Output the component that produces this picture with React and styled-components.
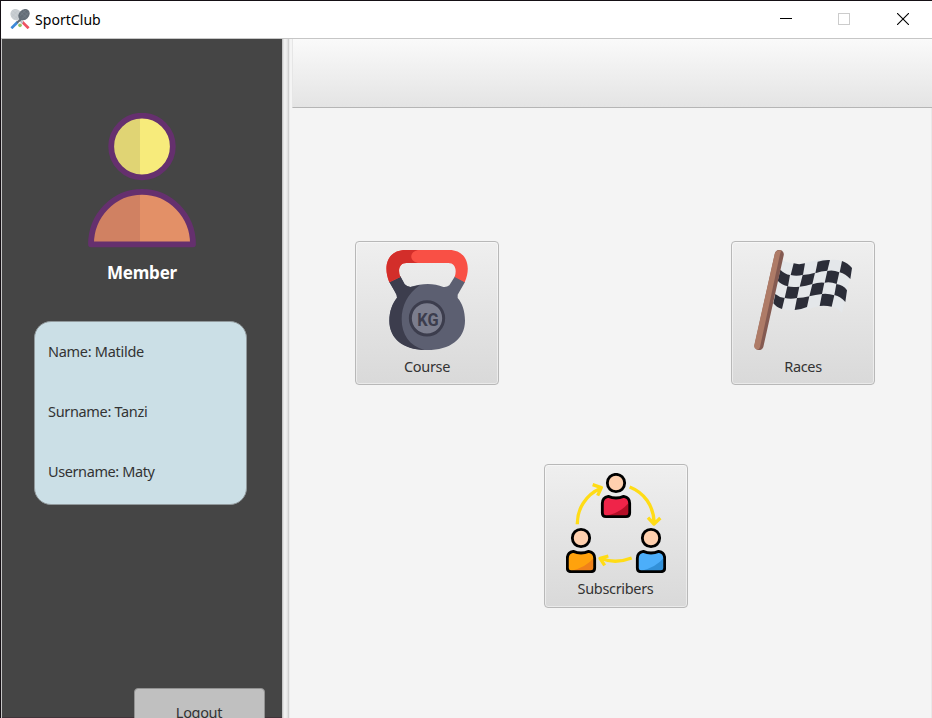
import React from "react";
import styled, { createGlobalStyle } from "styled-components";

const GlobalStyle = createGlobalStyle`
  * { box-sizing: border-box; }
  html, body { margin: 0; height: 100%; overflow: hidden; background: #f4f4f4; }
  svg { display: block; flex: none; }
`;

const Window = styled.div`
  width: 932px;
  height: 718px;
  display: flex;
  flex-direction: column;
  overflow: hidden;
  border-top: 1px solid #151015;
  border-left: 1px solid #151015;
  background: #f4f4f4;
  color: #333;
  font-family: "Noto Sans", "Open Sans", sans-serif;
  font-size: 15px;
`;

const TitleBar = styled.header`
  flex: none;
  height: 38px;
  display: flex;
  align-items: center;
  justify-content: space-between;
  padding: 0 23px 1px 9px;
  background: #fff;
  border-bottom: 1px solid #c6c6c6;
`;

const TitleGroup = styled.div`
  display: flex;
  align-items: center;
  gap: 5px;
  color: #000;

  span { padding-top: 2px; }
`;

const Controls = styled.div`
  display: grid;
  grid-template-columns: 58px 59px 12px;
  align-items: center;
`;

const Text = styled.span`
  display: block;
  white-space: nowrap;
  line-height: 20px;
  font-size: ${(p) => p.$size || 14.5}px;
  letter-spacing: ${(p) => p.$track ?? -0.33}px;
`;

const Body = styled.div`
  flex: 1;
  min-height: 0;
  display: flex;
  border-left: 1px solid #c6c6c6;
`;

const Sidebar = styled.aside`
  flex: none;
  width: 280px;
  display: flex;
  flex-direction: column;
  align-items: center;
  padding-top: 74px;
  background: #454545;
  border-bottom: 1px solid #40343a;
`;

const Role = styled.h2`
  margin: 12px 0 0;
  color: #fff;
  font-size: 17px;
  line-height: 24px;
  font-weight: 700;
  letter-spacing: ${(p) => p.$track}px;
`;

const InfoCard = styled.section`
  flex: none;
  width: 213px;
  height: 184px;
  margin: 36px 3px 0 0;
  padding: 19px 13px;
  display: flex;
  flex-direction: column;
  gap: 40px;
  border: 1px solid #91999c;
  border-radius: 17px;
  background: #cbdfe6;
`;

const LogoutButton = styled.button`
  flex: none;
  align-self: flex-end;
  width: 131px;
  height: 50px;
  margin: 183px 17px 0 0;
  padding: 0 1px 2px 0;
  display: flex;
  align-items: center;
  justify-content: center;
  border: 1px solid #929292;
  border-radius: 4px;
  background: #c0c0c0;
  color: #333;
  font-family: inherit;
`;

const Divider = styled.div`
  flex: none;
  width: 8px;
  border-left: 1px solid #c8c8c8;
  background: linear-gradient(90deg, #e2e2e2 0 1px, #f0f0f0 1px 3px, #ebebeb 3px 4px, #e2e2e2 4px 5px, #d0d0d0 5px 6px, #ececec 6px);
`;

const Main = styled.main`
  flex: 1;
  padding-left: 2px;
  border-right: 1px solid #e9e9e9;
`;

const ToolBar = styled.div`
  height: 69px;
  margin-right: -1px;
  border-left: 1px solid #e6e6e6;
  border-bottom: 1px solid #b5b5b5;
  background: linear-gradient(#fafafa, #e4e4e4);
`;

const Tiles = styled.div`
  display: grid;
  grid-template-columns: 144px 144px;
  column-gap: 232px;
  row-gap: 79px;
  padding: 133px 0 0 63px;
`;

const Tile = styled.button`
  width: 144px;
  height: 144px;
  padding: 8px 0 0;
  display: flex;
  flex-direction: column;
  align-items: center;
  gap: ${(p) => (p.$wide ? 5 : 6)}px;
  border: 1px solid #b8b8b8;
  border-radius: 4px;
  background: linear-gradient(#efefef, #d9d9d9);
  box-shadow: inset 0 0 0 1px rgba(255, 255, 255, 0.45);
  color: #333;
  font-family: inherit;
  ${(p) => p.$wide && "grid-column: 1 / -1; justify-self: center; margin-left: 1px;"}
`;

function RacketsIcon() {
  return (
    <svg width="20" height="20" viewBox="0 0 60 60">
      <path d="M40 42 53 55" stroke="#ee5261" strokeWidth="8" strokeLinecap="square" />
      <path d="M20 42 7 55" stroke="#3d8ad9" strokeWidth="8" strokeLinecap="square" />
      <path d="m22 28 16 14" stroke="#b6bdc4" strokeWidth="5" />
      <ellipse cx="18" cy="17" rx="16" ry="18" transform="rotate(-42 18 17)" fill="#c9ced2" />
      <path d="m4 13 20 17M8 5l20 17M4 25 23 5M12 31 29 14" stroke="#b3babf" />
      <path d="M37 27 21 41" stroke="#5d6974" strokeWidth="6" />
      <ellipse cx="42" cy="17" rx="15" ry="19" transform="rotate(45 42 17)" fill="#646e78" />
      <path d="m32 10 18 17M38 4l17 16M30 20 48 3M36 29 56 9" stroke="#7c8791" strokeWidth="1.5" />
      <circle cx="30" cy="49" r="5.5" fill="#8fc366" />
    </svg>
  );
}

function WindowControls() {
  return (
    <Controls>
      <svg width="12" height="12" shapeRendering="crispEdges"><path d="M0 5.5h12" stroke="#000" /></svg>
      <svg width="12" height="12"><rect x=".5" y=".5" width="11" height="11" fill="none" stroke="#ccc" /></svg>
      <svg width="12" height="12"><path d="m0 0 12 12M12 0 0 12" stroke="#000" strokeWidth="1.1" /></svg>
    </Controls>
  );
}

function MemberIcon() {
  return (
    <svg width="110" height="136" viewBox="0 0 110 136">
      <circle cx="55" cy="33.5" r="31" fill="#f7eb7b" />
      <path d="M53 4A29.5 29.5 0 0 0 53 63Z" fill="#e0d474" />
      <circle cx="55" cy="33.5" r="30.8" fill="none" stroke="#65306e" strokeWidth="5.8" />
      <path d="M4 131.3A51 52.5 0 0 1 106 131.3Z" fill="#e39067" />
      <path d="M53 79A51 52.5 0 0 0 4 131.3H53Z" fill="#d08162" />
      <path d="M4 131.3A51 52.5 0 0 1 106 131.3Z" fill="none" stroke="#65306e" strokeWidth="5.8" strokeLinejoin="round" />
    </svg>
  );
}

function KettlebellIcon() {
  return (
    <svg width="100" height="100" viewBox="81 42 300 300">
      <path d="M151 121 164 145Q170 152 181 153C218 141 251 141 280 153Q291 154 298 148L315 121 345 138 323 176V186C337 202 345 226 345 254C345 309 300 342 232 342C165 342 118 309 118 254C118 226 127 202 141 185Q141 177 134 166L118 138Z" fill="#5c5f71" />
      <path d="M151 121 164 145Q170 152 181 153L210 147C172 173 155 211 155 250C155 295 178 330 223 342C159 340 118 308 118 254C118 226 127 202 141 185Q141 177 134 166L118 138Z" fill="#3c3d4d" />
      <path d="M118 139C96 84 117 42 167 42H298C346 42 367 87 344 139L314 123C322 100 314 81 295 81H169C149 81 142 101 151 123Z" fill="#f95045" />
      <path d="M118 139C96 84 117 42 167 42H204C177 47 177 76 204 81H169C149 81 142 101 151 123Z" fill="#d32e2a" />
      <circle cx="231" cy="247" r="50" fill="#7b7d8d" stroke="#3c3d4d" strokeWidth="9" />
      <text x="202" y="270" fontFamily="Roboto, sans-serif" fontSize="55" fontWeight="700" textLength="64" lengthAdjust="spacingAndGlyphs" fill="#3c3d4d">KG</text>
    </svg>
  );
}

function FlagIcon() {
  return (
    <svg width="100" height="100" viewBox="81 42 300 300">
      <path d="M165 72Q181 80 201 83C233 91 267 64 311 72Q331 70 348 75Q366 81 379 97L348 231Q332 212 317 212C274 200 241 230 206 222Q182 224 169 218L142 202Z" fill="#e4e7ea" />
      <g fill="#2b2d38">
        <path d="M203 82Q219 87 237 82L231 116Q213 122 194 117Z" />
        <path d="M275 77Q293 71 312 72L304 104Q286 104 268 112Z" />
        <path d="M348 75Q366 81 378 96L373 129Q359 114 341 109Z" />
        <path d="M163 101Q176 114 192 117L186 151Q167 147 155 134Z" />
        <path d="M230 117Q250 115 267 110L259 144Q240 151 221 152Z" />
        <path d="M304 105Q321 101 340 109L332 144Q314 137 296 140Z" />
        <path d="M184 151Q200 155 220 152L213 186Q194 191 176 186Z" />
        <path d="M259 145Q277 138 295 140L288 174Q268 176 250 181Z" />
        <path d="M331 144Q352 146 363 163L358 198Q344 182 325 177Z" />
        <path d="M148 174Q159 184 176 186L168 219Q151 214 142 202Z" />
        <path d="M213 186Q231 186 250 181L243 213Q225 221 206 222Z" />
        <path d="M288 174Q307 172 325 178L317 212Q299 208 281 210Z" />
      </g>
      <path d="M160 55 99 329" stroke="#845a51" strokeWidth="27" strokeLinecap="round" />
      <path d="M146 54Q149 40 166 43L162 55 102 333Q99 342 94 341Q82 337 85 326Z" fill="#ae7b67" />
    </svg>
  );
}

function Person({ x, y, color, shade }) {
  return (
    <g transform={`translate(${x} ${y})`} strokeLinejoin="round">
      <circle cx="45" cy="30" r="26" fill="#ffd0ae" stroke="#000" strokeWidth="8.5" />
      <path d="M22 70Q45 80 68 70Q86 73 86 91V120Q86 131 75 131H15Q4 131 4 120V91Q4 73 22 70Z" fill={color} />
      <path d="M82 91V120Q82 128 75 128H17Q60 118 82 91Z" fill={shade} />
      <path d="M22 70Q45 80 68 70Q86 73 86 91V120Q86 131 75 131H15Q4 131 4 120V91Q4 73 22 70Z" fill="none" stroke="#000" strokeWidth="8.5" />
    </g>
  );
}

function SubscribersIcon() {
  return (
    <svg width="100" height="100" viewBox="84 45 300 300">
      <g fill="none" stroke="#ffdc16" strokeWidth="10" strokeLinejoin="round">
        <path d="M118 199C117 153 143 111 188 91M164 80 190 89 179 113" />
        <path d="M275 87C318 104 347 142 349 196M330 179 348 198 367 180" />
        <path d="M281 300Q231 319 188 301M211 294 186 301 200 322" />
      </g>
      <Person x={189} y={45} color="#ef2449" shade="#b40f27" />
      <Person x={84} y={210} color="#ffa20d" shade="#f0811a" />
      <Person x={294} y={210} color="#4caefa" shade="#3190d8" />
    </svg>
  );
}

export default function App() {
  return (
    <>
      <GlobalStyle />
      <Window>
        <TitleBar>
          <TitleGroup>
            <RacketsIcon />
            <Text $size={14} $track={0.05}>SportClub</Text>
          </TitleGroup>
          <WindowControls />
        </TitleBar>
        <Body>
          <Sidebar>
            <MemberIcon />
            <Role $track={-0.2}>Member</Role>
            <InfoCard>
              <Text $track={-0.28}>Name: Matilde</Text>
              <Text>Surname: Tanzi</Text>
              <Text $track={-0.4}>Username: Maty</Text>
            </InfoCard>
            <LogoutButton><Text>Logout</Text></LogoutButton>
          </Sidebar>
          <Divider />
          <Main>
            <ToolBar />
            <Tiles>
              <Tile><KettlebellIcon /><Text>Course</Text></Tile>
              <Tile><FlagIcon /><Text>Races</Text></Tile>
              <Tile $wide><SubscribersIcon /><Text>Subscribers</Text></Tile>
            </Tiles>
          </Main>
        </Body>
      </Window>
    </>
  );
}
